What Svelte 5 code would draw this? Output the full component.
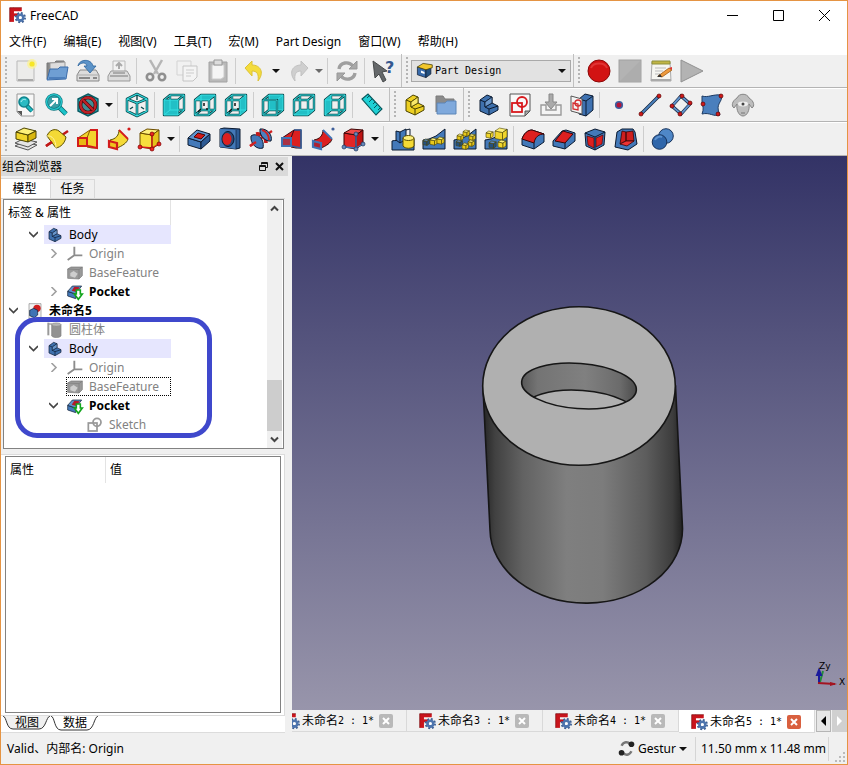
<script lang="ts">
	interface ToolItem {
		icon?: string;
		label?: string;
		menu?: boolean;
		sep?: boolean;
		combo?: boolean;
	}

	interface TreeRow {
		level: number;
		icon: string;
		label: string;
		arrow?: 'open' | 'closed';
		dim?: boolean;
		bold?: boolean;
		active?: boolean;
		focused?: boolean;
	}

	const TEAL = '#1fd0d4';
	const BLUE_LINE = '#0b1a30';

	// wireframe cube seen from the front, with some of its faces filled
	function viewCube(face: string, inner = '') {
		const wire = 'M2 7H16V22H2ZM8 2H22V17H8ZM2 7L8 2M16 7L22 2M16 22L22 17M2 22L8 17';
		return `<path d="${wire}" fill="none" stroke="#0a4a4e" stroke-width="2.4" stroke-linejoin="round"/>
			<path d="${face}" fill="#22bfc6"/>
			<path d="${wire}" fill="none" stroke="#35dfe2" stroke-width="1"/>${inner}`;
	}

	const ticks = '<path d="M11 10V13M5 19L8 16M13 16H15" stroke="#111" stroke-width="1.5"/>';

	// solid box: front, top and side face
	function box(front: string, top: string, side: string, line: string) {
		return `<g stroke="${line}" stroke-width="1" stroke-linejoin="round">
			<path d="M2 6L14 8V22L2 20Z" fill="${front}"/>
			<path d="M2 6L9 2L21 3L14 8Z" fill="${top}"/>
			<path d="M14 8L21 3V17L14 22Z" fill="${side}"/></g>`;
	}

	function dots(points: number[][], color: string, line: string) {
		return points
			.map(([x, y]) => `<circle cx="${x}" cy="${y}" r="2" fill="${color}" stroke="${line}" stroke-width=".7"/>`)
			.join('');
	}

	function miniBox(x: number, y: number, s: number, a: string, b: string) {
		return `<g transform="translate(${x} ${y}) scale(${s})" stroke="#4a4200" stroke-width="${0.6 / s}" stroke-linejoin="round">
			<path d="M0 2L5 3V8L0 7Z" fill="${a}"/><path d="M0 2L3 0L8 1L5 3Z" fill="${b}"/><path d="M5 3L8 1V6L5 8Z" fill="${a}"/></g>`;
	}

	// L-shaped step block: outline, tread and riser edges
	const stepShape = `<g stroke-linejoin="round" stroke-width="1">
		<path d="M3 7L10 2L15 4V10L21 13V17L12 22L3 18Z"/>
		<path d="M3 7L8 9V14L12 16V22M8 9L15 4M8 14L15 10M12 16L21 13" fill="none"/></g>`;

	const wedge = '<path d="M1 22V13L7 12L14 9L23 2V22Z" fill="#4379b9" stroke="#0b1a30"/>';

	const icons: Record<string, string> = {
		logo: `<g fill="#c9151c"><rect x="1" y="1" width="6" height="20"/><rect x="6" y="1" width="12" height="5"/><rect x="6" y="9" width="8" height="4"/></g>
			<path d="M1 1H18M1 1V21" stroke="#7c0b10" fill="none"/>
			<circle cx="16" cy="15" r="6.5" fill="none" stroke="#3f6093" stroke-width="3" stroke-dasharray="2.6 2.5"/>
			<circle cx="16" cy="15" r="4" fill="none" stroke="#4d74ad" stroke-width="4"/><circle cx="16" cy="15" r="2" fill="#fff"/>`,
		new: `<path d="M3 2H20V22H3Z" fill="#ececea" stroke="#b9b9b9"/><path d="M4 21H19" stroke="#aaa" stroke-width="2"/>
			<circle cx="18" cy="5" r="5" fill="#fbf39a" opacity=".8"/><circle cx="18" cy="5" r="2.6" fill="#f7e625"/>`,
		open: `<path d="M2 20V4H9L11 2H19V9" fill="#888" stroke="#777"/><path d="M5 4L20 3V12H5Z" fill="#ddd" stroke="#999"/>
			<path d="M2 21L5 10H13L15 8H23L21 20Z" fill="#6f9fd3" stroke="#3b6ca9"/><path d="M4 19H20" stroke="#4d7fbb" stroke-width="2"/>`,
		save: `<path d="M4 11H20L23 16V22H1V16Z" fill="#dcdcdc" stroke="#888"/><path d="M1 16H23" stroke="#aaa"/><path d="M3 19H14M17 19H21" stroke="#888" stroke-width="2"/>
			<path d="M2 7C3 0 15 -1 17 7H20L14 14L8 7H11C10 3 5 3 2 7Z" fill="#5c93c8" stroke="#2d649d" stroke-width=".8"/>`,
		print: `<path d="M6 12V2H18V12" fill="#f2f2f2" stroke="#bbb"/><path d="M12 10V4M9 7L12 4L15 7" stroke="#aaa" stroke-width="2" fill="none"/>
			<path d="M4 12H20L23 17V22H1V17Z" fill="#dcdcdc" stroke="#999"/><path d="M3 17H21M6 14H18" stroke="#999" stroke-width="1.5"/>`,
		cut: `<path d="M6 1L14 15M18 1L10 15" stroke="#b5b5b5" stroke-width="2.5"/><circle cx="6" cy="18" r="3.2" fill="none" stroke="#8f8f8f" stroke-width="2.6"/><circle cx="18" cy="18" r="3.2" fill="none" stroke="#8f8f8f" stroke-width="2.6"/>`,
		copy: `<path d="M2 2H16V16H2Z" fill="#f1f1f1" stroke="#d3d3d3"/><path d="M8 7H22V18L18 22H8Z" fill="#f4f4f4" stroke="#c4c4c4"/><path d="M11 11H19M11 14H19M11 17H16" stroke="#ccc"/>`,
		paste: `<path d="M3 3H21V23H3Z" fill="#b9b9b9" stroke="#a2a2a2"/><path d="M6 6H18V18L15 20H6Z" fill="#f5f5f5" stroke="#ccc"/><path d="M8 1H16V6H8Z" fill="#ddd" stroke="#999"/>`,
		undo: `<path d="M2 9L9 2V6C17 6 22 13 15 22C16 15 14 12 9 12V17Z" fill="#f4dc3c" stroke="#dcc236" stroke-linejoin="round"/>`,
		redo: `<path d="M22 9L15 2V6C7 6 2 13 9 22C8 15 10 12 15 12V17Z" fill="#cfcfcf" stroke="#c2c2c2" stroke-linejoin="round"/>`,
		refresh: `<g fill="none" stroke="#9f9f9f" stroke-width="3.4"><path d="M4 10C5 3 14 2 18 7"/><path d="M20 14C19 21 10 22 6 17"/></g>
			<path d="M22 2V10H14ZM2 22V14H10Z" fill="#a8a8a8" stroke="#979797"/>`,
		whats: `<path d="M1 2L15 12L10 13L14 21L11 23L7 15L3 19Z" fill="#65686a" stroke="#46494a"/><text x="13" y="14" font-family="DejaVu Sans" font-size="16" font-weight="bold" fill="#35588f">?</text>`,
		record: `<circle cx="12" cy="12" r="11" fill="#d21313" stroke="#8c0808"/><path d="M4 9C6 3 18 3 20 9" stroke="#e03434" fill="none" stroke-width="2"/>`,
		stop: `<rect x="1" y="1" width="22" height="22" fill="#b3b3b3" stroke="#a2a2a2"/><path d="M2 22L22 2V22Z" fill="#adadad"/>`,
		macro: `<path d="M3 3H21L22 22H2Z" fill="#f6f6f1" stroke="#aaa"/><path d="M3 2H21V5H3Z" fill="#c1b544" stroke="#8d8f3a"/><path d="M6 9H17M6 12H14M6 15H11" stroke="#bbb"/><path d="M2 21H22" stroke="#aaa" stroke-width="2"/>
			<path d="M9 17L20 9L23 11L13 18Z" fill="#ee9a3c" stroke="#a35c13" stroke-width=".8"/><path d="M20 9L23 8L23 11Z" fill="#d33"/><path d="M8 18L11 15L13 18Z" fill="#333"/>`,
		play: `<path d="M1 1L23 12L1 23Z" fill="#b3b3b3" stroke="#919191"/>`,
		fitAll: `<path d="M3 1H20V23H7L3 19Z" fill="#f7f7f7" stroke="#999"/><path d="M3 18H8V23Z" fill="#555"/><path d="M13 13L18 18" stroke="#06656c" stroke-width="4.5"/><path d="M13 13L18 18" stroke="#1cb5bd" stroke-width="2.6"/><circle cx="10" cy="9" r="5" fill="#29bac3" stroke="#0f838c" stroke-width="1.6"/><path d="M7 9C8 6 11 6 12 7" stroke="#b9f3f5" fill="none"/>`,
		fitSel: `<path d="M13 13L21 21" stroke="#06656c" stroke-width="5"/><path d="M13 13L21 21" stroke="#1cc3c9" stroke-width="3.4"/><circle cx="9" cy="9" r="7.4" fill="#3c9ea6" stroke="#0b7780" stroke-width="2.6"/><circle cx="9" cy="9" r="7.4" fill="none" stroke="#27c8cd" stroke-width="1.4"/><path d="M5 13L11 7M7 6H12V11" stroke="#fff" stroke-width="2" fill="none"/>`,
		drawStyle: `<path d="M12 1L22 6V18L12 23L2 18V6Z" fill="#2aaab5" stroke="#0a5b63" stroke-width="1.4"/><circle cx="12" cy="12" r="7.5" fill="#438d94" stroke="#450608" stroke-width="3.6"/><circle cx="12" cy="12" r="7.5" fill="none" stroke="#bf2227" stroke-width="2.4"/><path d="M7 7L17 17" stroke="#450608" stroke-width="3.6"/><path d="M7 7L17 17" stroke="#bf2227" stroke-width="2.4"/>`,
		iso: `<g fill="none" stroke-linejoin="round"><path d="M12 1L22 6V18L12 23L2 18V6ZM2 6L12 10L22 6M12 10V23" stroke="#0a4a4e" stroke-width="2.6"/><path d="M12 1L22 6V18L12 23L2 18V6ZM2 6L12 10L22 6M12 10V23" stroke="#35dfe2" stroke-width="1.1"/><path d="M12 3V7M5 16L8 14M19 16L16 14" stroke="#0a4a4e" stroke-width="1.4"/></g>`,
		front: viewCube('M2 7H16V22H2Z'),
		top: viewCube('M2 7L8 2H22L16 7Z', ticks),
		right: viewCube('M16 7L22 2V17L16 22Z', ticks),
		rear: viewCube('M8 2H22V17H8Z', '<path d="M2 7H16V22H2Z" fill="none" stroke="#0a4a4e" stroke-width="2.2"/><path d="M2 7H16V22H2Z" fill="none" stroke="#35dfe2"/>'),
		bottom: viewCube('M2 22L8 17H22L16 22Z'),
		left: viewCube('M2 7L8 2V17L2 22Z'),
		measure: `<path d="M2 6L8 1L22 16L16 22Z" fill="${TEAL}" stroke="#06565b" stroke-width="1.1"/><path d="M9 3L7 5M12 6L9 9M15 9L13 11M17 12L14 15M20 15L18 17" stroke="#06565b"/>`,
		part: `<g fill="#eccf23" stroke="#4a4200">${stepShape}</g><path d="M8 9L15 4V10L8 14Z" fill="#f9e86b" stroke="#4a4200" stroke-width=".8"/>`,
		group: `<path d="M2 19V3H9L11 6H20V12" fill="#8a8a8a" stroke="#7b7b7b"/><path d="M3 21V10H11L13 8H22V21Z" fill="#7fa9dc" stroke="#5c86b8"/>`,
		body: `<g fill="#3f71ad" stroke="${BLUE_LINE}">${stepShape}</g><path d="M8 9L15 4V10L8 14Z" fill="#6996ca" stroke="${BLUE_LINE}" stroke-width=".8"/>`,
		sketch: `<path d="M2 1H22V18L17 23H2Z" fill="#f8f8f8" stroke="#555"/><path d="M17 23V18H22Z" fill="#aaa" stroke="#555"/><g fill="none" stroke="#d8181c" stroke-width="1.8"><rect x="4" y="10" width="10" height="9"/><circle cx="14" cy="9" r="5"/></g>`,
		importS: `<path d="M2 12H7V17H17V12H22V22H2Z" fill="#f4f4f4" stroke="#999" stroke-width="1.4"/><path d="M10 1H14V9H18L12 16L6 9H10Z" fill="#aaa" stroke="#888"/>`,
		mapS: `<path d="M9 6L15 1L23 3V17L16 23L9 21Z" fill="#3f72b1" stroke="${BLUE_LINE}"/><path d="M9 6L16 8V23M16 8L23 3" stroke="${BLUE_LINE}" fill="none"/><path d="M1 3L12 6V21L1 18Z" fill="#f4f4f4" stroke="#555"/><g fill="none" stroke="#d42e30" stroke-width="1.3"><path d="M3 10L8 11V17L3 16Z"/><circle cx="8" cy="10" r="3"/></g>`,
		point: `<circle cx="12" cy="12" r="3.3" fill="#b5163a" stroke="#3b5fa0" stroke-width="1.6"/>`,
		line: `<path d="M3 21L21 3" stroke="${BLUE_LINE}" stroke-width="3.2"/><path d="M3 21L21 3" stroke="#4a80bd" stroke-width="2"/>` + dots([[3, 21], [21, 3]], '#d01818', '#5d0606'),
		plane: `<path d="M12 3L21 11L12 21L3 13Z" fill="none" stroke="${BLUE_LINE}" stroke-width="3.2"/><path d="M12 3L21 11L12 21L3 13Z" fill="none" stroke="#5f8fc8" stroke-width="2"/>` + dots([[13, 3], [21, 10], [11, 21], [3, 13]], '#d01818', '#5d0606'),
		binder: `<path d="M2 3C8 5 13 1 21 2C24 9 14 10 20 22C13 24 10 19 2 21C4 16 3 13 2 11Z" fill="#4a7fbd" stroke="#1c3a63"/>` + dots([[21, 3], [3, 11], [18, 21]], '#d01818', '#5d0606'),
		clone: `<path d="M6 5C8 0 16 0 18 5C23 8 24 13 21 15L18 11C19 17 16 23 12 23C8 23 5 17 6 11L3 15C0 13 1 8 6 5Z" fill="#bdbdbd" stroke="#858585"/><ellipse cx="12" cy="11" rx="5" ry="2.4" fill="#eee"/><circle cx="12" cy="11" r="1.5" fill="#444"/><path d="M10 20H14" stroke="#777"/>`,
		pad: `<g fill="#e4e4e4" stroke="#555"><path d="M1 19L9 15L23 18L14 23Z"/><path d="M1 16L9 12L23 15L14 20Z"/></g><path d="M2 5L14 8V15L2 12Z" fill="#f0d52c" stroke="#4a4200"/><path d="M2 5L10 1L22 4L14 8Z" fill="#fdf17a" stroke="#4a4200"/><path d="M14 8L22 4V11L14 15Z" fill="#d9b60f" stroke="#4a4200"/>`,
		revolve: `<path d="M1 19L23 4" stroke="#c01818" stroke-width="2.4"/><path d="M2 9C4 3 10 1 14 4L21 10C20 16 16 20 11 21Z" fill="#f3d935" stroke="#5a4d00"/><path d="M2 9C7 8 11 13 11 21" fill="none" stroke="#fff3a0"/><path d="M1 19L7 15" stroke="#c01818" stroke-width="2.4"/>`,
		loft: `<path d="M2 11L14 3H21V21H16L11 20Z" fill="#f3d52e" stroke="#8a5a00"/><path d="M14 3H21V21L12 19" fill="none" stroke="#d31b1b" stroke-width="2"/><path d="M14 3L11 11" stroke="#8a5a00"/><path d="M2 11H11V19H2Z" fill="#e9b712" stroke="#d31b1b" stroke-width="2"/>`,
		sweep: `<path d="M3 13C9 12 12 8 12 3L21 12C20 16 15 19 10 21Z" fill="#f4d937" stroke="#5a4d00"/><path d="M12 3L21 12" stroke="#d31b1b" stroke-width="1.8"/><path d="M2 14L10 16V22L2 20Z" fill="#eec31d" stroke="#d31b1b" stroke-width="2.2"/><circle cx="22" cy="2" r="1.6" fill="#d31b1b"/>`,
		addPrim: box('#f7df3c', '#fdf07a', '#e3c21a', '#6b4c00') + '<path d="M14 8V21L2 20M14 21L21 17" stroke="#d31b1b" stroke-width="1.4" fill="none"/>' + dots([[14, 7], [2, 20], [14, 22], [21, 17]], '#e22', '#700'),
		pocket: `<path d="M1 11L14 15V22L1 18Z" fill="#4379b9" stroke="${BLUE_LINE}"/><path d="M1 11L10 3L23 7L14 15Z" fill="#5e93cd" stroke="${BLUE_LINE}"/><path d="M14 15L23 7V14L14 22Z" fill="#2d5b95" stroke="${BLUE_LINE}"/><path d="M7 10L11 6L18 8L14 12Z" fill="#d31b1b" stroke="#4b0505"/>`,
		hole: `<path d="M2 2L6 1L22 2V21L18 22L2 20Z" fill="#2d5b95" stroke="${BLUE_LINE}"/><path d="M2 2L18 3V22L2 20Z" fill="#4379b9"/><path d="M18 3V22" stroke="${BLUE_LINE}" stroke-width=".6"/><ellipse cx="10" cy="12" rx="6" ry="7.5" fill="#2c4a78" stroke="${BLUE_LINE}"/><ellipse cx="9" cy="12" rx="4.5" ry="6" fill="#dd2020"/>`,
		groove: `<path d="M1 19L23 4" stroke="#d02020" stroke-width="2.2"/><path d="M2 9C7 5 16 11 14 21C8 23 1 17 2 9Z" fill="#4379b9" stroke="${BLUE_LINE}"/><path d="M7 7C13 6 17 10 17 16" fill="none" stroke="#c41b1b" stroke-width="3.6"/><path d="M11 2C18 1 24 8 22 14C17 15 10 9 11 2Z" fill="#4b80c0" stroke="${BLUE_LINE}"/><path d="M13 3C17 4 20 8 20 13" fill="none" stroke="#d02020" stroke-width="2"/><path d="M1 19L7 15" stroke="#d02020" stroke-width="2.2"/>`,
		subLoft: `<path d="M2 11L14 3H21V21H16L11 20Z" fill="#dc2020" stroke="#3b0a14"/><path d="M14 3H21V21L12 19" fill="none" stroke="#345f9a" stroke-width="1.6"/><path d="M14 3L11 11" stroke="#3b0a14"/><path d="M2 11H11V19H2Z" fill="#a83246" stroke="#3f73b4" stroke-width="2"/>`,
		subSweep: `<path d="M3 13C9 12 12 8 12 3L21 12C20 16 15 19 10 21Z" fill="#dc2020" stroke="#330505"/><path d="M12 3L21 12" stroke="#3f73b4" stroke-width="1.8"/><path d="M2 14L10 16V22L2 20Z" fill="#b02030" stroke="#3f73b4" stroke-width="2.2"/><circle cx="22" cy="2" r="1.6" fill="#3f5f9a"/>`,
		subPrim: box('#e22626', '#ef4b4b', '#bd1414', '#3b0505') + '<path d="M14 8V21L2 20M14 21L21 17" stroke="#3f73b4" stroke-width="1.3" fill="none"/>' + dots([[14, 7], [2, 20], [14, 22], [21, 17]], '#6488bb', '#1c345a'),
		mirror: `<path d="M1 14C7 12 14 17 23 12V23H1Z" fill="#4379b9" stroke="${BLUE_LINE}"/><path d="M5 4L9 5L15 2V12L9 16L5 13Z" fill="#4379b9" stroke="${BLUE_LINE}"/><path d="M9 5V16M15 3L19 2V8" stroke="${BLUE_LINE}" fill="none"/><path d="M12 11V19C14 22 21 22 23 19V11Z" fill="#f3d935" stroke="#5a4d00"/><ellipse cx="17.500" cy="11" rx="5.500" ry="2.500" fill="#fdf07a" stroke="#5a4d00"/>`,
		linear: `${wedge}${miniBox(1, 12, 0.8, '#24507f', '#5a8ac5')}${miniBox(8, 11, 0.9, '#e8c91c', '#fdf07a')}${miniBox(15, 10, 0.9, '#e8c91c', '#fdf07a')}`,
		polar: `${wedge}${miniBox(4, 7, 0.8, '#e8c91c', '#fdf07a')}${miniBox(10, 3, 0.8, '#e8c91c', '#fdf07a')}${miniBox(16, 7, 0.8, '#e8c91c', '#fdf07a')}${miniBox(15, 13, 0.8, '#e8c91c', '#fdf07a')}${miniBox(9, 16, 0.8, '#e8c91c', '#fdf07a')}${miniBox(3, 13, 0.8, '#24507f', '#5a8ac5')}`,
		multi: `${wedge}${miniBox(11, 1, 1.5, '#f0d52c', '#fdf07a')}${miniBox(2, 4, 0.9, '#f0d52c', '#fdf07a')}${miniBox(5, 14, 0.9, '#24507f', '#5a8ac5')}${miniBox(14, 13, 1, '#f0d52c', '#fdf07a')}`,
		fillet: `<path d="M1 12C3 6 7 3 11 3L23 7V15L13 22L1 18Z" fill="#4379b9" stroke="${BLUE_LINE}"/><path d="M1 12C3 6 7 3 11 3L23 7C18 7 14 10 13 16Z" fill="#dd2020" stroke="#3b0505"/><path d="M13 16V22" stroke="${BLUE_LINE}"/>`,
		chamfer: `<path d="M1 14L10 4L14 3L23 6V14L13 22L1 19Z" fill="#4379b9" stroke="${BLUE_LINE}"/><path d="M3 14L11 4L21 7L13 16Z" fill="#dd2020" stroke="#3b0505"/><path d="M13 16V22" stroke="${BLUE_LINE}"/>`,
		draft: `<path d="M2 6L12 2L22 5L21 18L12 23L3 19Z" fill="#4379b9" stroke="${BLUE_LINE}"/><path d="M4 9L11 11V21L5 18ZM13 11L20 8L19 17L13 20Z" fill="#dd2020" stroke="#3b0505" stroke-width=".6"/><path d="M2 6L12 10L22 5M12 10V23" fill="none" stroke="${BLUE_LINE}"/>`,
		thickness: `<path d="M1 20L3 5L8 2H19L21 5L23 17L14 23Z" fill="#4379b9" stroke="${BLUE_LINE}"/><path d="M8 4L12 5V14L6 17ZM12 5L19 4L20 14L12 14Z" fill="#cf1e1e" stroke="#3b0505" stroke-width=".8"/><path d="M6 17L12 14L20 14L13 19Z" fill="#ef3333" stroke="#3b0505" stroke-width=".8"/>`,
		boolean: `<circle cx="15" cy="9" r="7.300" fill="#4f87c7" stroke="#17335c"/><circle cx="8.500" cy="15" r="7.300" fill="#2f66aa" stroke="#17335c"/><path d="M4 13C5 10 9 9 11 10" stroke="#5d92cf" fill="none" stroke-width="2"/>`,
		wb: `<path d="M2 7L14 10V22L2 18Z" fill="#386bab" stroke="${BLUE_LINE}"/><path d="M14 10L21 6V17L14 22Z" fill="#24507f" stroke="${BLUE_LINE}"/><path d="M2 7L10 2L23 4V8L14 11Z" fill="#f1c62b" stroke="#3c3400"/><path d="M7 12L12 14V17L7 15Z" fill="#fff"/>`,
		doc: `<path d="M3 1H21V23H3Z" fill="#f2f2f2" stroke="#888"/><circle cx="15" cy="8" r="5.5" fill="#cf1e1e"/><path d="M4 11L10 8L16 11V18L11 22L4 19Z" fill="#3f73b4" stroke="${BLUE_LINE}"/>`,
		origin: `<path d="M11 1V14M11 14L23 14M11 14L1 21" stroke="#8c8c8c" stroke-width="2.8" fill="none"/>`,
		base: `<path d="M1 6L6 3H23V16L18 21L1 20Z" fill="#9a9a9a" stroke="#777"/><path d="M1 6L18 7V21M18 7L23 3" stroke="#7b7b7b" fill="none"/><path d="M5 12L10 9L16 13L12 19L5 17Z" fill="#cecece"/>`,
		cylinder: `<path d="M7 4V21C10 24 18 24 21 21V4Z" fill="#929292" stroke="#808080"/><ellipse cx="14" cy="4" rx="7" ry="2.600" fill="#b5b5b5" stroke="#808080"/><path d="M2 1V20" stroke="#999" stroke-width="3"/><path d="M2 3H8" stroke="#999" stroke-width="2"/>`,
		pocketTip: `<path d="M1 11L13 15V22L1 18Z" fill="#4379b9" stroke="${BLUE_LINE}"/><path d="M1 11L8 3H22L13 15Z" fill="#5e93cd" stroke="${BLUE_LINE}"/><path d="M7 10L11 4L19 5L14 12Z" fill="#b51a2a"/><path d="M14 9H20V15H23L17 23L11 15H14Z" fill="#fff" stroke="#12a51c" stroke-width="2.4"/>`,
		sketchDim: `<g fill="none" stroke="#999" stroke-width="2.6"><rect x="2" y="9" width="13" height="12"/><circle cx="15" cy="8" r="6"/></g>`,
		nav: `<path d="M5 8C8 2 14 2 17 6M19 16C16 22 10 22 7 18" fill="none" stroke="#777" stroke-width="3.4"/><circle cx="19" cy="6" r="4" fill="#222"/><circle cx="5" cy="18" r="4" fill="#222"/>`
	};

	const sep: ToolItem = { sep: true };
	const t = (icon: string, label: string, menu = false): ToolItem => ({ icon, label, menu });

	const toolRows: ToolItem[][][] = [
		[
			[
				t('new', 'New'), t('open', 'Open'), t('save', 'Save'), t('print', 'Print'), sep,
				t('cut', 'Cut'), t('copy', 'Copy'), t('paste', 'Paste'), sep,
				t('undo', 'Undo', true), t('redo', 'Redo', true), sep,
				t('refresh', 'Refresh'), sep, t('whats', 'Help')
			],
			[{ combo: true }],
			[t('record', 'Record'), t('stop', 'Stop'), t('macro', 'Macros'), t('play', 'Execute')]
		],
		[
			[
				t('fitAll', 'Fit all'), t('fitSel', 'Fit selection'), t('drawStyle', 'Draw style', true), sep,
				t('iso', 'Isometric'), sep,
				t('front', 'Front'), t('top', 'Top'), t('right', 'Right'), sep,
				t('rear', 'Rear'), t('bottom', 'Bottom'), t('left', 'Left'), sep,
				t('measure', 'Measure')
			],
			[t('part', 'Part'), t('group', 'Group')],
			[
				t('body', 'Body'), t('sketch', 'Sketch'), t('importS', 'Edit sketch'), t('mapS', 'Map sketch'), sep,
				t('point', 'Point'), t('line', 'Line'), t('plane', 'Plane'), t('binder', 'Binder'), t('clone', 'Clone')
			]
		],
		[
			[
				t('pad', 'Pad'), t('revolve', 'Revolution'), t('loft', 'Loft'), t('sweep', 'Pipe'), t('addPrim', 'Additive', true), sep,
				t('pocket', 'Pocket'), t('hole', 'Hole'), t('groove', 'Groove'), t('subLoft', 'Cut loft'), t('subSweep', 'Cut pipe'), t('subPrim', 'Subtractive', true), sep,
				t('mirror', 'Mirrored'), t('linear', 'Linear pattern'), t('polar', 'Polar pattern'), t('multi', 'MultiTransform'), sep,
				t('fillet', 'Fillet'), t('chamfer', 'Chamfer'), t('draft', 'Draft'), t('thickness', 'Thickness'), sep,
				t('boolean', 'Boolean')
			]
		]
	];

	const menus = ['文件(F)', '编辑(E)', '视图(V)', '工具(T)', '宏(M)', 'Part Design', '窗口(W)', '帮助(H)'];

	const tree: TreeRow[] = [
		{ level: 1, icon: 'body', label: 'Body', arrow: 'open', active: true },
		{ level: 2, icon: 'origin', label: 'Origin', arrow: 'closed', dim: true },
		{ level: 2, icon: 'base', label: 'BaseFeature', dim: true },
		{ level: 2, icon: 'pocketTip', label: 'Pocket', arrow: 'closed', bold: true },
		{ level: 0, icon: 'doc', label: '未命名5', arrow: 'open', bold: true },
		{ level: 1, icon: 'cylinder', label: '圆柱体', dim: true },
		{ level: 1, icon: 'body', label: 'Body', arrow: 'open', active: true },
		{ level: 2, icon: 'origin', label: 'Origin', arrow: 'closed', dim: true },
		{ level: 2, icon: 'base', label: 'BaseFeature', dim: true, focused: true },
		{ level: 2, icon: 'pocketTip', label: 'Pocket', arrow: 'open', bold: true },
		{ level: 3, icon: 'sketchDim', label: 'Sketch', dim: true }
	];

	const docs = ['未命名2', '未命名3', '未命名4', '未命名5'];
	let current = $state('未命名5');
</script>

{#snippet icon(name: string, size: number)}
	<svg class="icon" width={size} height={size} viewBox="0 0 24 24" aria-hidden="true">{@html icons[name]}</svg>
{/snippet}

<div class="window">
	<header class="titlebar">
		{@render icon('logo', 17)}
		<span class="title">FreeCAD</span>
		<button class="win-btn" aria-label="Minimize"><svg width="11" height="11"><path d="M0 5.5H11" /></svg></button>
		<button class="win-btn" aria-label="Maximize"><svg width="11" height="11"><path d="M.5 .5H10.5V10.5H.5Z" /></svg></button>
		<button class="win-btn" aria-label="Close"><svg width="11" height="11"><path d="M0 0L11 11M11 0L0 11" /></svg></button>
	</header>

	<nav class="menubar">
		{#each menus as menu}
			<button>{menu}</button>
		{/each}
	</nav>

	{#each toolRows as row}
		<div class="tool-row">
			{#each row as bar}
				<div class="toolbar" role="toolbar">
					<span class="handle"></span>
					{#each bar as item}
						{#if item.sep}
							<span class="tool-sep"></span>
						{:else if item.combo}
							<div class="combo">
								{@render icon('wb', 17)}
								<select aria-label="Workbench">
									<option>Part Design</option>
								</select>
								<span class="caret"></span>
							</div>
						{:else}
							<button class="tool" aria-label={item.label}>{@render icon(item.icon ?? '', 24)}</button>
							{#if item.menu}
								<button class="tool-menu" class:off={item.icon === 'redo'} aria-label="{item.label} menu"><span class="caret"></span></button>
							{/if}
						{/if}
					{/each}
				</div>
			{/each}
		</div>
	{/each}

	<main class="main">
		<aside class="dock">
			<div class="dock-title">
				<span>组合浏览器</span>
				<button aria-label="Float"><svg width="9" height="9"><path d="M2.5 2.5V.5H8.5V5.5H6.5M.5 3.5H6.5V8.5H.5ZM.5 4.5H6.5M2.5 1.5H8.5" /></svg></button>
				<button aria-label="Close panel"><svg width="9" height="9"><path d="M1 1L8 8M8 1L1 8" stroke-width="2" /></svg></button>
			</div>

			<div class="dock-tabs" role="tablist">
				<button role="tab" aria-selected="true" class="selected">模型</button>
				<button role="tab" aria-selected="false">任务</button>
			</div>

			<div class="tree-frame">
				<div class="tree">
					<div class="tree-head">标签 &amp; 属性</div>
					{#each tree as row}
						<div class="tree-row" style="padding-left: {row.level * 20}px">
							<span class="twist">
								{#if row.arrow}
									<button class={row.arrow} aria-label="Toggle {row.label}">
										<svg width="9" height="9"><path d={row.arrow === 'open' ? 'M0 2L4.5 6.5L9 2' : 'M2.5 0L7 4.5L2.5 9'} /></svg>
									</button>
								{/if}
							</span>
							<span class="cell" class:active={row.active} class:dim={row.dim} class:bold={row.bold} class:focused={row.focused}>
								{@render icon(row.icon, 16)}
								{row.label}
							</span>
						</div>
					{/each}
				</div>
				<div class="scrollbar">
					<button aria-label="Scroll up"><svg width="9" height="9"><path d="M1 6.5L4.5 3L8 6.5" /></svg></button>
					<div class="track"><div class="thumb"></div></div>
					<button aria-label="Scroll down"><svg width="9" height="9"><path d="M1 2.5L4.5 6L8 2.5" /></svg></button>
				</div>
				<div class="marker"></div>
			</div>

			<div class="props-frame">
				<div class="props">
					<table>
						<thead>
							<tr><th>属性</th><th>值</th></tr>
						</thead>
					</table>
				</div>
			</div>
			<div class="props-tabs" role="tablist">
				<button role="tab" aria-selected="false">
					<svg width="50" height="15"><path d="M1 0C5 1 4 13 11 13H37C44 13 44 1 48 0" fill="#f0f0f0" stroke="#333" /></svg>
					<span>视图</span>
				</button>
				<button role="tab" aria-selected="true">
					<svg width="50" height="15"><path d="M1 0C5 1 4 14 11 14H37C44 14 44 1 48 0" fill="#fff" stroke="#333" /></svg>
					<span>数据</span>
				</button>
			</div>
		</aside>

		<section class="workspace">
			<div class="view3d">
				<svg viewBox="0 0 555 554" preserveAspectRatio="xMidYMid slice">
					<defs>
						<linearGradient id="side">
							<stop offset="0" stop-color="#252525" />
							<stop offset="0.06" stop-color="#414141" />
							<stop offset="0.2" stop-color="#626262" />
							<stop offset="0.42" stop-color="#7f7f7f" />
							<stop offset="0.6" stop-color="#7c7c7c" />
							<stop offset="0.82" stop-color="#5c5c5c" />
							<stop offset="0.95" stop-color="#3d3d3d" />
							<stop offset="1" stop-color="#222" />
						</linearGradient>
						<linearGradient id="bore">
							<stop offset="0" stop-color="#555" />
							<stop offset="0.15" stop-color="#747474" />
							<stop offset="0.55" stop-color="#808080" />
							<stop offset="0.85" stop-color="#6b6b6b" />
							<stop offset="1" stop-color="#484848" />
						</linearGradient>
						<clipPath id="opening">
							<ellipse cx="287" cy="230" rx="57.5" ry="22.6" transform="rotate(4.3 287 230)" />
						</clipPath>
					</defs>
					<g stroke="#161616" stroke-width="1.6">
						<path d="M191 232L198 374A96 74 0 0 0 390.5 372L383.5 230Z" fill="url(#side)" />
						<ellipse cx="287" cy="230" rx="96.3" ry="79.3" fill="#b0b0b0" />
						<g clip-path="url(#opening)">
							<rect x="228" y="205" width="118" height="52" fill="url(#bore)" stroke="none" />
							<ellipse cx="289" cy="257" rx="57.5" ry="22.6" transform="rotate(4.3 289 257)" fill="#b0b0b0" />
						</g>
						<ellipse cx="287" cy="230" rx="57.5" ry="22.6" transform="rotate(4.3 287 230)" fill="none" />
					</g>
					<g fill="none" stroke-width="2">
						<path d="M528 526L531 515" stroke="#1f8a3a" />
						<path d="M527 527V515" stroke="#1b1b9c" />
						<path d="M525 519L527 514L529 519Z" fill="#1b1b9c" stroke="#1b1b9c" />
						<path d="M526 527L543 528" stroke="#a31420" />
						<path d="M538 526L545 528L538 530Z" fill="#a31420" stroke="none" />
					</g>
					<g class="axis-names">
						<text x="527" y="513">Zy</text>
						<text x="547" y="529">X</text>
					</g>
				</svg>
			</div>

			<div class="doc-bar">
				<div class="doc-tabs">
					{#each docs as doc}
						<div class="doc-tab" class:current={doc === current}>
							{@render icon('logo', 17)}
							<button class="doc-name" onclick={() => (current = doc)}>{doc.slice(0, 3)}<span>{doc.slice(3)} : 1*</span></button>
							<button class="doc-close" aria-label="Close {doc}"><svg width="8" height="8"><path d="M1 1L7 7M7 1L1 7" /></svg></button>
						</div>
					{/each}
				</div>
				<button class="step" aria-label="Previous tab"><svg width="5" height="10"><path d="M5 0V10L0 5Z" /></svg></button>
				<button class="step off" aria-label="Next tab"><svg width="5" height="10"><path d="M0 0V10L5 5Z" /></svg></button>
			</div>
		</section>
	</main>

	<footer class="status">
		<span class="message">Valid、内部名: Origin</span>
		<button class="nav-style">{@render icon('nav', 17)}<span>Gestur</span><i class="caret"></i></button>
		<span class="size">11.50 mm x 11.48 mm</span>
		<svg class="grip" width="10" height="10"><path d="M8 0h2v2h-2zM4 4h2v2h-2zM8 4h2v2h-2zM0 8h2v2h-2zM4 8h2v2h-2zM8 8h2v2h-2z" /></svg>
	</footer>
</div>

<style>
	:global(body) {
		margin: 0;
	}

	.window {
		display: flex;
		flex-direction: column;
		box-sizing: border-box;
		min-height: 100vh;
		border: 1px solid #e59443;
		background: #f0f0f0;
		color: #000;
		font: 12px/18px 'Noto Sans', 'Noto Sans CJK SC', sans-serif;
	}

	button {
		display: flex;
		align-items: center;
		justify-content: center;
		margin: 0;
		padding: 0;
		border: 0;
		background: none;
		color: inherit;
		font: inherit;
	}

	.icon {
		flex: none;
		display: block;
		overflow: visible;
	}

	.caret {
		width: 0;
		height: 0;
		border: 4px solid transparent;
		border-top-color: #111;
		border-bottom: 0;
	}

	/* title and menu */
	.titlebar {
		display: flex;
		align-items: center;
		height: 29px;
		padding-left: 8px;
		background: #fff;
	}
	.title {
		flex: 1;
		margin-left: 4px;
	}
	.win-btn {
		width: 46px;
		height: 29px;
	}
	.win-btn path {
		fill: none;
		stroke: #000;
	}
	.menubar {
		display: flex;
		align-items: center;
		gap: 1px;
		height: 24px;
		background: #fff;
	}
	.menubar button {
		padding: 0 8px;
		white-space: nowrap;
	}

	/* toolbars */
	.tool-row {
		display: flex;
		height: 33px;
		border-bottom: 1px solid #b4b4b4;
		overflow: hidden;
	}
	.toolbar {
		display: flex;
		align-items: center;
		padding-right: 2px;
		border-right: 1px solid #c0c0c0;
		box-shadow: inset 0 1px #fff;
	}
	.toolbar:last-child {
		flex: 1;
		border-right: 0;
	}
	.handle {
		flex: none;
		width: 5px;
		height: 28px;
		margin-left: 4px;
		background: radial-gradient(circle at 1px 1px, #b5b5b5 1px, transparent 1px) 0 0 / 3px 4px repeat-y;
	}
	.tool {
		flex: none;
		width: 31px;
		height: 31px;
	}
	.tool-menu {
		flex: none;
		width: 12px;
		height: 31px;
	}
	.tool-menu.off {
		opacity: 0.6;
	}
	.tool-sep {
		flex: none;
		width: 1px;
		height: 26px;
		margin: 0 3px 0 2px;
		background: #cdcdcd;
	}
	.combo {
		display: flex;
		align-items: center;
		box-sizing: border-box;
		width: 160px;
		height: 22px;
		padding: 0 4px;
		border: 1px solid #a9a9a9;
		background: #e2e2e2;
	}
	.combo select {
		flex: 1;
		min-width: 0;
		padding: 0 2px;
		border: 0;
		appearance: none;
		background: none;
		color: #000;
		font: 10px/18px 'DejaVu Sans Mono', monospace;
	}

	.main {
		flex: 1;
		display: flex;
		min-height: 0;
	}

	/* combo view */
	.dock {
		flex: none;
		display: flex;
		flex-direction: column;
		width: 284px;
		padding: 1px 7px 0 0;
	}
	.dock-title {
		display: flex;
		align-items: center;
		height: 19px;
		margin-right: -3px;
		padding: 0 1px;
		background: #dadada;
	}
	.dock-title span {
		flex: 1;
	}
	.dock-title button {
		width: 16px;
		height: 16px;
	}
	.dock-title path {
		fill: none;
		stroke: #111;
	}
	.dock-tabs {
		display: flex;
		align-items: flex-end;
		height: 22px;
		border-bottom: 1px solid #d9d9d9;
	}
	.dock-tabs button {
		box-sizing: border-box;
		width: 44px;
		height: 19px;
		border: 1px solid #d9d9d9;
		border-width: 1px 1px 0 0;
	}
	.dock-tabs .selected {
		width: 50px;
		height: 20px;
		padding-right: 2px;
		background: #fff;
	}

	.tree-frame {
		position: relative;
		display: flex;
		margin: 0 1px 0 2px;
		border: 1px solid #828282;
		background: #fff;
	}
	.tree {
		flex: 1;
		padding-bottom: 14px;
	}
	.tree-head {
		box-sizing: border-box;
		width: 167px;
		height: 25px;
		padding: 4px;
		border-right: 1px solid #e3e3e3;
	}
	.tree-row {
		display: flex;
		box-sizing: border-box;
		width: 167px;
		height: 19px;
	}
	.twist {
		flex: none;
		display: flex;
		align-items: center;
		justify-content: center;
		box-sizing: border-box;
		width: 20px;
		padding-right: 2px;
	}
	.twist path {
		fill: none;
		stroke: #444;
		stroke-width: 1.6;
	}
	.twist .closed path {
		stroke: #a0a0a0;
	}
	.cell {
		flex: 1;
		display: flex;
		align-items: center;
		gap: 6px;
		box-sizing: border-box;
		padding-left: 3px;
		white-space: nowrap;
	}
	.cell.active {
		background: #e6e6fe;
	}
	.cell.dim {
		color: #828282;
	}
	.cell.bold {
		font-weight: bold;
	}
	.cell.focused {
		margin-left: 2px;
		padding-left: 0;
		border: 1px dotted #000;
	}
	.scrollbar {
		display: flex;
		flex-direction: column;
		width: 15px;
		margin-right: 1px;
		background: #f0f0f0;
	}
	.scrollbar button {
		height: 17px;
	}
	.scrollbar path {
		fill: none;
		stroke: #444;
		stroke-width: 2;
	}
	.track {
		flex: 1;
		display: flex;
		align-items: flex-end;
	}
	.thumb {
		width: 100%;
		height: 24%;
		background: #cdcdcd;
	}

	/* hand-drawn highlight around the last document */
	.marker {
		position: absolute;
		left: 11px;
		top: 117px;
		box-sizing: border-box;
		width: 197px;
		height: 121px;
		border: 5px solid #3f48cc;
		border-radius: 22px;
	}

	.props-frame {
		flex: 1;
		display: flex;
		margin-top: 5px;
		padding: 1px 3px 2px 4px;
		border: 1px solid #dcdcdc;
		border-left: 0;
		background: #fff;
	}
	.props {
		flex: 1;
		border: 1px solid #828282;
	}
	.props table {
		width: 100%;
		border-collapse: collapse;
		table-layout: fixed;
	}
	.props th {
		height: 26px;
		padding: 0 4px;
		font-weight: normal;
		text-align: left;
	}
	.props th:first-child {
		width: 91px;
		border-right: 1px solid #e3e3e3;
	}
	.props-tabs {
		display: flex;
		height: 16px;
		border-bottom: 1px solid #dcdcdc;
		background: #fff;
	}
	.props-tabs button {
		display: grid;
		align-items: start;
		margin-left: 1px;
		margin-right: -3px;
		line-height: 14px;
	}
	.props-tabs svg,
	.props-tabs span {
		grid-area: 1 / 1;
	}

	/* 3D view and its tabs */
	.workspace {
		flex: 1;
		display: flex;
		flex-direction: column;
		min-width: 0;
	}
	.view3d {
		flex: 1;
		min-height: 0;
		display: flex;
		background: linear-gradient(#333366, #9895ab);
	}
	.view3d > svg {
		flex: 1;
		min-width: 0;
		display: block;
	}
	.axis-names {
		font: 9px 'DejaVu Sans', sans-serif;
	}
	.doc-bar {
		display: flex;
		height: 23px;
	}
	.doc-tabs {
		flex: 1;
		display: flex;
		justify-content: flex-end;
		min-width: 0;
		overflow: hidden;
	}
	.doc-tab {
		flex: none;
		display: flex;
		align-items: center;
		box-sizing: border-box;
		width: 136px;
		height: 22px;
		padding: 1px 0 0 12px;
		border: 1px solid #d9d9d9;
		border-width: 0 1px 1px 0;
	}
	.doc-tab.current {
		height: 23px;
		padding-top: 2px;
		background: #fff;
	}
	.doc-name {
		width: 74px;
		margin: 0 3px 0 2px;
		justify-content: flex-start;
	}
	.doc-name span {
		white-space: pre;
		font: 10px/18px 'DejaVu Sans Mono', monospace;
	}
	.doc-close {
		width: 14px;
		height: 14px;
		border-radius: 2px;
		background: #b9b9b9;
	}
	.current .doc-close {
		background: #d9603f;
	}
	.doc-close path {
		stroke: #fff;
		stroke-width: 2;
	}
	.step {
		box-sizing: border-box;
		width: 15px;
		height: 22px;
		margin-left: 1px;
		border: 1px solid #b5b5b5;
		background: #e6e6e6;
	}
	.step.off {
		background: #d0d0d0;
		border-color: #d0d0d0;
	}
	.step.off path {
		fill: #fff;
	}

	.status {
		display: flex;
		align-items: center;
		height: 31px;
		padding-left: 6px;
	}
	.message {
		flex: 1;
	}
	.nav-style {
		height: 24px;
		margin-right: 8px;
		gap: 3px;
	}
	.size {
		padding: 3px 2px 3px 5px;
		border: 1px solid #d5d5d5;
		border-width: 0 1px;
	}
	.grip {
		align-self: flex-end;
		margin: 0 2px 2px 6px;
		fill: #bbb;
	}
</style>
